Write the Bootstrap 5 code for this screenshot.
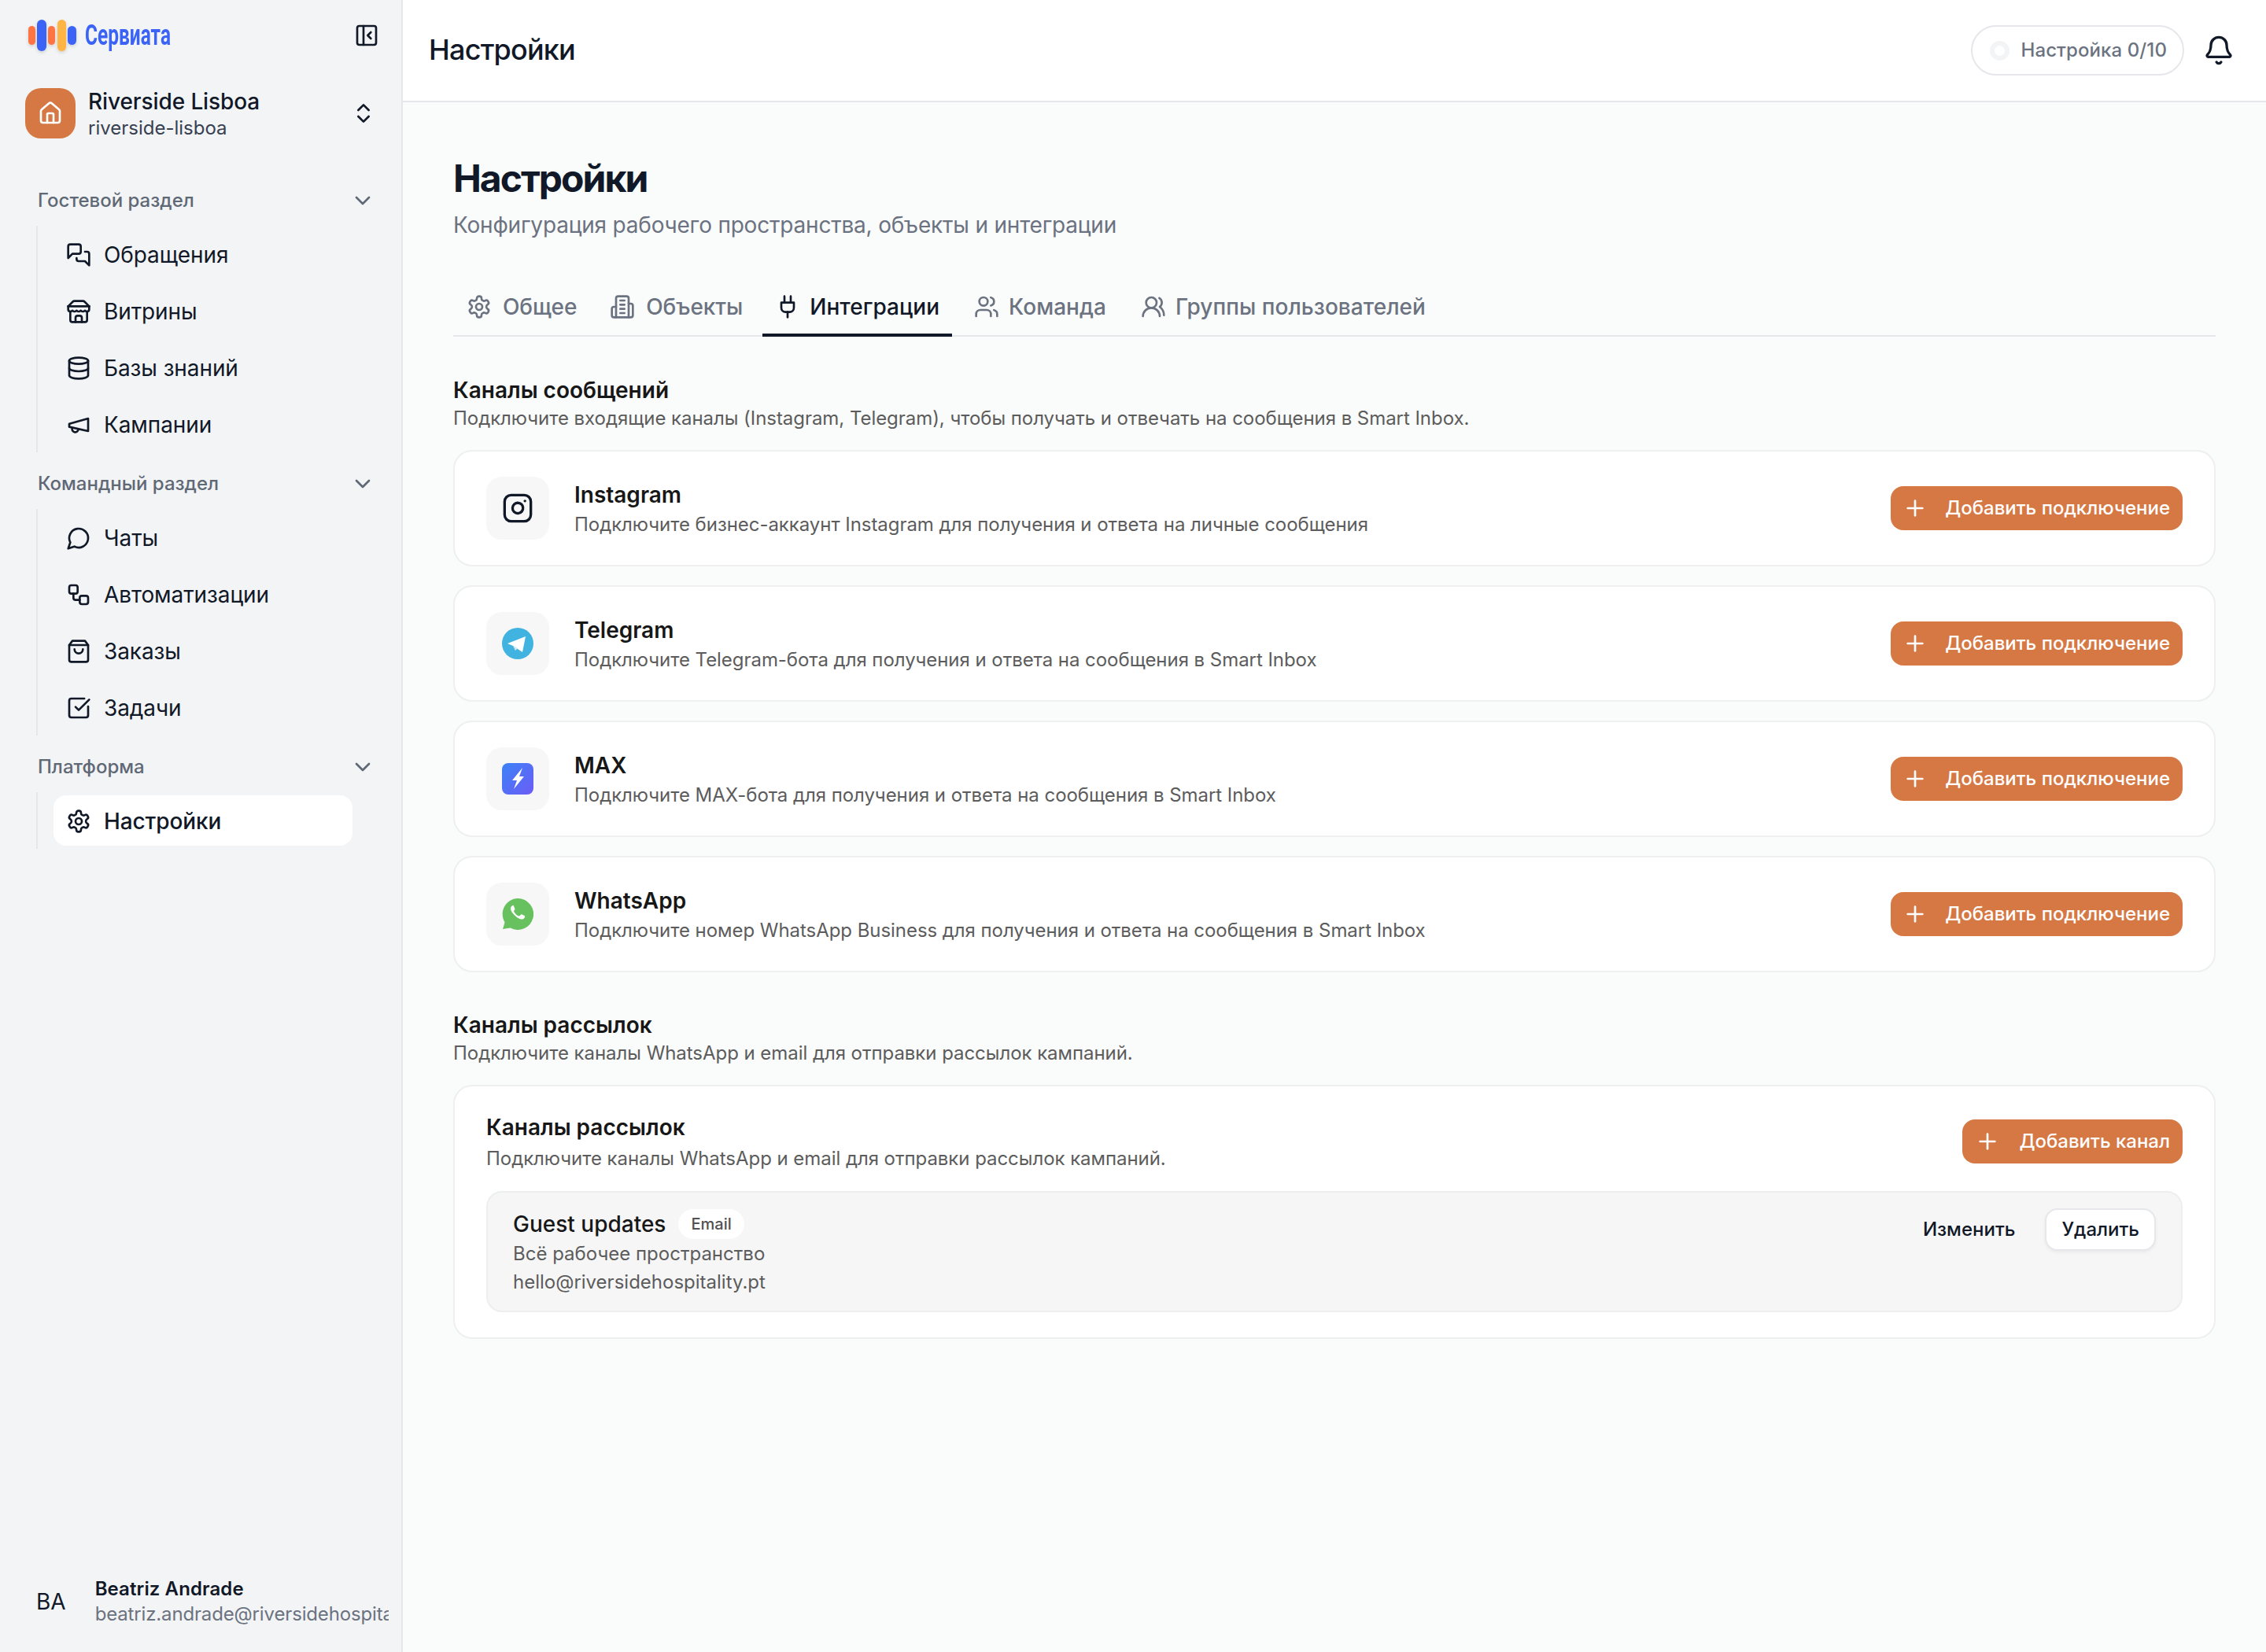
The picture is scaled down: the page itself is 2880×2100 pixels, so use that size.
<!DOCTYPE html>
<html lang="ru">
<head>
    <meta charset="UTF-8">
    <meta name="viewport" content="width=device-width, initial-scale=1.0">
    <title>Настройки</title>
    <link href="https://cdn.jsdelivr.net/npm/bootstrap@5.3.0/dist/css/bootstrap.min.css" rel="stylesheet">
    <style>
        body {
            font-family: Inter, "Noto Sans", sans-serif;
            background-color: #fafbfb;
            color: #111827;
        }
        svg.ico {
            fill: none;
            stroke: currentColor;
            stroke-width: 2;
            stroke-linecap: round;
            stroke-linejoin: round;
            flex-shrink: 0;
        }
        .side-panel {
            width: 512px;
            background-color: #f3f4f6;
            border-right: 2px solid #e5e7eb;
        }
        .logo-row { height: 90px; padding: 0 28px 0 36px; }
        .logo-bars { width: 61px; height: 40px; gap: 2.2px; filter: drop-shadow(0 2px 2px rgba(0,0,0,.14)); }
        .logo-bars span { display: block; border-radius: 6px; }
        .logo-bars span:nth-child(1) { width: 9px; height: 24px; background: #ff7443; }
        .logo-bars span:nth-child(2) { width: 12px; height: 40px; background: #3b63f5; }
        .logo-bars span:nth-child(3) { width: 9px; height: 24px; background: #ff7443; }
        .logo-bars span:nth-child(4) { width: 11px; height: 40px; background: #ffb545; }
        .logo-bars span:nth-child(5) { width: 11px; height: 24px; background: #3b63f5; }
        .logo-text {
            font-family: Roboto, sans-serif;
            font-weight: 700;
            font-size: 36px;
            line-height: 40px;
            color: #3b63f5;
            transform: scaleX(.68);
            transform-origin: left center;
            white-space: nowrap;
            margin-left: 11px;
        }
        .space-row { height: 64px; margin: 22px 0 0 32px; padding-right: 32px; }
        .space-icon {
            width: 64px; height: 64px;
            background-color: #d67844;
            border-radius: 20px;
            color: #fff;
        }
        .space-name { font-size: 28px; line-height: 36px; font-weight: 500; letter-spacing: -.1px; }
        .space-slug { font-size: 24px; line-height: 28px; color: #374151; margin-top: 2px; }
        .group-label {
            height: 56px;
            margin: 12px 32px 4px 48px;
            font-size: 24px;
            font-weight: 500;
            color: #5f6875;
            padding-right: 1px;
        }
        .first-group { margin-top: 51px; }
        .group-list {
            margin-left: 46px;
            padding: 4px 0 4px 20px;
            border-left: 2px solid #e5e7eb;
            width: 402px;
            gap: 8px;
        }
        .side-link {
            height: 64px;
            padding: 1px 16px 0;
            gap: 16px;
            font-size: 28px;
            letter-spacing: -.1px;
            color: #111827;
            border-radius: 16px;
            text-decoration: none;
        }
        .side-link.on { background-color: #fff; font-weight: 500; }
        .user-row { height: 104px; padding: 0 16px 0 46px; gap: 37px; margin-bottom: 12px; }
        .user-init { font-size: 28px; }
        .user-name { font-size: 24px; line-height: 32px; font-weight: 600; letter-spacing: .1px; }
        .user-mail { font-size: 24px; line-height: 32px; letter-spacing: -.15px; color: #6b7280; white-space: nowrap; overflow: hidden; }
        .top-bar {
            height: 130px;
            background-color: #fff;
            border-bottom: 2px solid #e5e7eb;
            padding: 0 40px 0 33px;
        }
        .top-title { font-size: 36px; font-weight: 500; letter-spacing: -.8px; margin: 0; }
        .setup-pill {
            height: 64px;
            border: 2px solid #e5e7eb;
            border-radius: 32px;
            padding: 0 20px 0 22px;
            gap: 14px;
            font-size: 24px;
            letter-spacing: .1px;
            font-weight: 500;
            color: #6b7280;
            background: #fff;
        }
        .setup-ring { width: 25px; height: 25px; border: 6px solid #f3f4f6; border-radius: 50%; }
        .page-body { padding: 64px 64px 0; }
        .page-head { font-size: 48px; line-height: 62px; padding-top: 2px; font-weight: 700; letter-spacing: -2px; margin: 0; }
        .page-sub { font-size: 28px; line-height: 40px; letter-spacing: -.2px; color: #6b7280; margin: 8px 0 46px; }
        .tab-row { border-bottom: 2px solid #e5e7eb; gap: 12px; height: 76px; }
        .tab-link {
            height: 76px;
            padding: 4px 16px 0;
            gap: 12px;
            font-size: 28px;
            letter-spacing: .03px;
            font-weight: 500;
            color: #6b7280;
            text-decoration: none;
            border-bottom: 4px solid transparent;
        }
        .tab-link:nth-child(-n+2) { padding-left: 17px; padding-right: 13px; gap: 14px; letter-spacing: -.1px; }
        .tab-link.on { color: #111827; border-bottom-color: #111827; }
        .sec-title { font-size: 28px; line-height: 40px; font-weight: 600; color: #171717; margin: 48px 0 0; }
        .sec-title.next { margin-top: 47px; }
        .sec-desc { font-size: 24px; line-height: 32px; letter-spacing: -.05px; color: #5c5c5c; margin: 0 0 24px; }
        .chan-card {
            height: 148px;
            border: 2px solid #eeeff1;
            border-radius: 24px;
            padding: 0 40px;
            gap: 32px;
            margin-bottom: 24px;
            background-color: #fff;
        }
        .chan-icon { width: 80px; height: 80px; border-radius: 20px; background-color: #f7f7f7; }
        .chan-name { font-size: 28px; line-height: 40px; font-weight: 600; color: #171717; }
        .chan-desc { font-size: 24px; line-height: 32px; letter-spacing: -.05px; color: #5c5c5c; margin-top: 2px; }
        .mail-card .chan-desc { margin-top: 4px; }
        .btn-add {
            height: 56px;
            padding: 0 16px 0 15px;
            gap: 22px;
            font-size: 24px;
            font-weight: 500;
            color: #fff;
            background-color: #d67844;
            border: 0;
            border-radius: 16px;
        }
        .mail-card .btn-add { padding-left: 16px; gap: 24px; }
        .btn-add:hover { background-color: #c96c3a; color: #fff; }
        .mail-card {
            border: 2px solid #eeeff1;
            border-radius: 24px;
            padding: 32px 40px;
            background-color: #fff;
        }
        .mail-box {
            border: 2px solid #eceef0;
            border-radius: 20px;
            background-color: #f6f6f7;
            padding: 20px 32px 18px;
            margin-top: 25px;
        }
        .mail-title { font-size: 28px; line-height: 40px; font-weight: 500; color: #171717; }
        .mail-chip {
            font-size: 20px;
            line-height: 38px;
            font-weight: 500;
            padding: 0 16px;
            border-radius: 19px;
            background-color: #fff;
            color: #525252;
        }
        .mail-line { font-size: 24px; line-height: 36px; color: #5c5c5c; }
        .mail-acts { gap: 14px; }
        .btn-ghosty, .btn-whity {
            height: 54px;
            padding: 0 24px;
            font-size: 24px;
            font-weight: 500;
            color: #111827;
            border-radius: 16px;
        }
        .btn-ghosty { border: 0; background: transparent; }
        .btn-whity { padding: 0 19px; border: 2px solid #e5e7eb; background-color: #fff; box-shadow: 0 2px 4px rgba(0,0,0,.05); }
    </style>
</head>
<body>
    <svg width="0" height="0" class="position-absolute">
        <symbol id="i-settings" viewBox="0 0 24 24"><path d="M12.22 2h-.44a2 2 0 0 0-2 2v.18a2 2 0 0 1-1 1.730l-.43.25a2 2 0 0 1-2 0l-.15-.08a2 2 0 0 0-2.730.73l-.22.38a2 2 0 0 0 .73 2.730l.15.1a2 2 0 0 1 1 1.720v.51a2 2 0 0 1-1 1.740l-.15.09a2 2 0 0 0-.73 2.730l.22.38a2 2 0 0 0 2.730.73l.15-.08a2 2 0 0 1 2 0l.43.25a2 2 0 0 1 1 1.730V20a2 2 0 0 0 2 2h.44a2 2 0 0 0 2-2v-.18a2 2 0 0 1 1-1.730l.43-.25a2 2 0 0 1 2 0l.15.08a2 2 0 0 0 2.730-.73l.22-.39a2 2 0 0 0-.73-2.730l-.15-.08a2 2 0 0 1-1-1.740v-.5a2 2 0 0 1 1-1.740l.15-.09a2 2 0 0 0 .73-2.730l-.22-.38a2 2 0 0 0-2.730-.73l-.15.08a2 2 0 0 1-2 0l-.43-.25a2 2 0 0 1-1-1.730V4a2 2 0 0 0-2-2z"/><circle cx="12" cy="12" r="3"/></symbol>
        <symbol id="i-chev" viewBox="0 0 24 24"><path d="m6 9 6 6 6-6"/></symbol>
        <symbol id="i-plus" viewBox="0 0 24 24"><path d="M5 12h14"/><path d="M12 5v14"/></symbol>
        <symbol id="i-users" viewBox="0 0 24 24"><path d="M16 21v-2a4 4 0 0 0-4-4H6a4 4 0 0 0-4 4v2"/><circle cx="9" cy="7" r="4"/><path d="M22 21v-2a4 4 0 0 0-3-3.87"/><path d="M16 3.13a4 4 0 0 1 0 7.75"/></symbol>
    </svg>

    <div class="d-flex vh-100">
        <aside class="side-panel d-flex flex-column flex-shrink-0">
            <div class="logo-row d-flex align-items-center justify-content-between">
                <div class="d-flex align-items-center">
                    <div class="logo-bars d-flex align-items-center">
                        <span></span><span></span><span></span><span></span><span></span>
                    </div>
                    <span class="logo-text">Сервиата</span>
                </div>
                <svg class="ico" width="32" height="32" viewBox="0 0 24 24"><rect width="18" height="18" x="3" y="3" rx="2"/><path d="M9 3v18"/><path d="m16 15-3-3 3-3"/></svg>
            </div>

            <div class="space-row d-flex align-items-center">
                <div class="space-icon d-flex align-items-center justify-content-center">
                    <svg class="ico" width="32" height="32" viewBox="0 0 24 24"><path d="M15 21v-8a1 1 0 0 0-1-1h-4a1 1 0 0 0-1 1v8"/><path d="M3 10a2 2 0 0 1 .709-1.528l7-5.999a2 2 0 0 1 2.582 0l7 5.999A2 2 0 0 1 21 10v9a2 2 0 0 1-2 2H5a2 2 0 0 1-2-2z"/></svg>
                </div>
                <div class="ms-3 flex-grow-1">
                    <div class="space-name">Riverside Lisboa</div>
                    <div class="space-slug">riverside-lisboa</div>
                </div>
                <svg class="ico" width="32" height="32" viewBox="0 0 24 24"><path d="m7 15 5 5 5-5"/><path d="m7 9 5-5 5 5"/></svg>
            </div>

            <div class="group-label first-group d-flex align-items-center justify-content-between">
                <span>Гостевой раздел</span>
                <svg class="ico" width="32" height="32"><use href="#i-chev"/></svg>
            </div>
            <div class="group-list d-flex flex-column">
                <a href="#" class="side-link d-flex align-items-center">
                    <svg class="ico" width="32" height="32" viewBox="0 0 24 24"><path d="M14 9a2 2 0 0 1-2 2H6l-4 4V4a2 2 0 0 1 2-2h8a2 2 0 0 1 2 2z"/><path d="M18 9h2a2 2 0 0 1 2 2v11l-4-4h-6a2 2 0 0 1-2-2v-1"/></svg>
                    Обращения</a>
                <a href="#" class="side-link d-flex align-items-center">
                    <svg class="ico" width="32" height="32" viewBox="0 0 24 24"><path d="m2 7 4.41-4.41A2 2 0 0 1 7.83 2h8.34a2 2 0 0 1 1.42.59L22 7"/><path d="M4 12v8a2 2 0 0 0 2 2h12a2 2 0 0 0 2-2v-8"/><path d="M15 22v-4a2 2 0 0 0-2-2h-2a2 2 0 0 0-2 2v4"/><path d="M2 7h20"/><path d="M22 7v3a2 2 0 0 1-2 2 2.7 2.7 0 0 1-1.59-.63.7.7 0 0 0-.82 0A2.7 2.7 0 0 1 16 12a2.7 2.7 0 0 1-1.59-.63.7.7 0 0 0-.82 0A2.7 2.7 0 0 1 12 12a2.7 2.7 0 0 1-1.59-.63.7.7 0 0 0-.82 0A2.7 2.7 0 0 1 8 12a2.7 2.7 0 0 1-1.59-.63.7.7 0 0 0-.82 0A2.7 2.7 0 0 1 4 12a2 2 0 0 1-2-2V7"/></svg>
                    Витрины</a>
                <a href="#" class="side-link d-flex align-items-center">
                    <svg class="ico" width="32" height="32" viewBox="0 0 24 24"><ellipse cx="12" cy="5" rx="9" ry="3"/><path d="M3 5V19A9 3 0 0 0 21 19V5"/><path d="M3 12A9 3 0 0 0 21 12"/></svg>
                    Базы знаний</a>
                <a href="#" class="side-link d-flex align-items-center">
                    <svg class="ico" width="32" height="32" viewBox="0 0 24 24"><path d="m3 11 18-5v12L3 14v-3z"/><path d="M11.6 16.8a3 3 0 1 1-5.8-1.6"/></svg>
                    Кампании</a>
            </div>

            <div class="group-label d-flex align-items-center justify-content-between">
                <span>Командный раздел</span>
                <svg class="ico" width="32" height="32"><use href="#i-chev"/></svg>
            </div>
            <div class="group-list d-flex flex-column">
                <a href="#" class="side-link d-flex align-items-center">
                    <svg class="ico" width="32" height="32" viewBox="0 0 24 24"><path d="M7.9 20A9 9 0 1 0 4 16.1L2 22Z"/></svg>
                    Чаты</a>
                <a href="#" class="side-link d-flex align-items-center">
                    <svg class="ico" width="32" height="32" viewBox="0 0 24 24"><rect width="8" height="8" x="3" y="3" rx="2"/><path d="M7 11v4a2 2 0 0 0 2 2h4"/><rect width="8" height="8" x="13" y="13" rx="2"/></svg>
                    Автоматизации</a>
                <a href="#" class="side-link d-flex align-items-center">
                    <svg class="ico" width="32" height="32" viewBox="0 0 24 24"><path d="M6 2 3 6v14a2 2 0 0 0 2 2h14a2 2 0 0 0 2-2V6l-3-4Z"/><path d="M3 6h18"/><path d="M16 10a4 4 0 0 1-8 0"/></svg>
                    Заказы</a>
                <a href="#" class="side-link d-flex align-items-center">
                    <svg class="ico" width="32" height="32" viewBox="0 0 24 24"><path d="M21 10.656V19a2 2 0 0 1-2 2H5a2 2 0 0 1-2-2V5a2 2 0 0 1 2-2h12.344"/><path d="m9 11 3 3L22 4"/></svg>
                    Задачи</a>
            </div>

            <div class="group-label d-flex align-items-center justify-content-between">
                <span>Платформа</span>
                <svg class="ico" width="32" height="32"><use href="#i-chev"/></svg>
            </div>
            <div class="group-list d-flex flex-column">
                <a href="#" class="side-link on d-flex align-items-center">
                    <svg class="ico" width="32" height="32"><use href="#i-settings"/></svg>
                    Настройки</a>
            </div>

            <div class="user-row d-flex align-items-center mt-auto">
                <span class="user-init">BA</span>
                <div class="overflow-hidden">
                    <div class="user-name">Beatriz Andrade</div>
                    <div class="user-mail">beatriz.andrade@riversidehospitality.pt</div>
                </div>
            </div>
        </aside>

        <div class="flex-grow-1 d-flex flex-column">
            <header class="top-bar d-flex align-items-center justify-content-between">
                <h1 class="top-title">Настройки</h1>
                <div class="d-flex align-items-center gap-4">
                    <div class="setup-pill d-flex align-items-center">
                        <span class="setup-ring"></span>
                        Настройка 0/10
                    </div>
                    <svg class="ico" width="40" height="40" viewBox="0 0 24 24"><path d="M10.268 21a2 2 0 0 0 3.464 0"/><path d="M3.262 15.326A1 1 0 0 0 4 17h16a1 1 0 0 0 .74-1.673C19.41 13.956 18 12.499 18 8A6 6 0 0 0 6 8c0 4.499-1.411 5.956-2.738 7.326"/></svg>
                </div>
            </header>

            <main class="page-body flex-grow-1">
                <h2 class="page-head">Настройки</h2>
                <p class="page-sub">Конфигурация рабочего пространства, объекты и интеграции</p>

                <nav class="tab-row d-flex">
                    <a href="#" class="tab-link d-flex align-items-center">
                        <svg class="ico" width="32" height="32"><use href="#i-settings"/></svg>Общее</a>
                    <a href="#" class="tab-link d-flex align-items-center">
                        <svg class="ico" width="32" height="32" viewBox="0 0 24 24"><path d="M6 22V4a2 2 0 0 1 2-2h8a2 2 0 0 1 2 2v18Z"/><path d="M6 12H4a2 2 0 0 0-2 2v6a2 2 0 0 0 2 2h2"/><path d="M18 9h2a2 2 0 0 1 2 2v9a2 2 0 0 1-2 2h-2"/><path d="M10 6h4"/><path d="M10 10h4"/><path d="M10 14h4"/><path d="M10 18h4"/></svg>Объекты</a>
                    <a href="#" class="tab-link on d-flex align-items-center">
                        <svg class="ico" width="32" height="32" viewBox="0 0 24 24"><path d="M12 22v-5"/><path d="M9 8V2"/><path d="M15 8V2"/><path d="M18 8v5a4 4 0 0 1-4 4h-4a4 4 0 0 1-4-4V8Z"/></svg>Интеграции</a>
                    <a href="#" class="tab-link d-flex align-items-center">
                        <svg class="ico" width="32" height="32"><use href="#i-users"/></svg>Команда</a>
                    <a href="#" class="tab-link d-flex align-items-center">
                        <svg class="ico" width="32" height="32" viewBox="0 0 24 24"><path d="M18 21a8 8 0 0 0-16 0"/><circle cx="10" cy="8" r="5"/><path d="M22 20c0-3.370-2-6.500-4-8a5 5 0 0 0-.45-8.300"/></svg>Группы пользователей</a>
                </nav>

                <h3 class="sec-title">Каналы сообщений</h3>
                <p class="sec-desc">Подключите входящие каналы (Instagram, Telegram), чтобы получать и отвечать на сообщения в Smart Inbox.</p>

                <div class="chan-card d-flex align-items-center">
                    <div class="chan-icon d-flex align-items-center justify-content-center">
                        <svg class="ico" width="40" height="40" viewBox="0 0 24 24"><rect width="20" height="20" x="2" y="2" rx="5"/><path d="M16 11.37A4 4 0 1 1 12.63 8 4 4 0 0 1 16 11.37z"/><path d="M17.5 6.5h.01"/></svg>
                    </div>
                    <div class="flex-grow-1">
                        <div class="chan-name">Instagram</div>
                        <div class="chan-desc">Подключите бизнес-аккаунт Instagram для получения и ответа на личные сообщения</div>
                    </div>
                    <button class="btn btn-add d-flex align-items-center"><svg class="ico" width="32" height="32"><use href="#i-plus"/></svg>Добавить подключение</button>
                </div>

                <div class="chan-card d-flex align-items-center">
                    <div class="chan-icon d-flex align-items-center justify-content-center">
                        <svg width="40" height="40" viewBox="0 0 40 40"><circle cx="20" cy="20" r="20" fill="#40b3e0"/><path d="M30 11 7 20l7 3 12 8z" fill="#fff"/><path d="M14 23l3 6 3-3z" fill="#d2e5f1"/></svg>
                    </div>
                    <div class="flex-grow-1">
                        <div class="chan-name">Telegram</div>
                        <div class="chan-desc">Подключите Telegram-бота для получения и ответа на сообщения в Smart Inbox</div>
                    </div>
                    <button class="btn btn-add d-flex align-items-center"><svg class="ico" width="32" height="32"><use href="#i-plus"/></svg>Добавить подключение</button>
                </div>

                <div class="chan-card d-flex align-items-center">
                    <div class="chan-icon d-flex align-items-center justify-content-center">
                        <svg width="40" height="40" viewBox="0 0 40 40"><defs><linearGradient id="maxg" x1="0" y1="0" x2="1" y2="1"><stop offset="0" stop-color="#3b82f6"/><stop offset="1" stop-color="#6d5cf6"/></linearGradient></defs><rect width="40" height="40" rx="8" fill="url(#maxg)"/><path d="M26 6 13 22h6l-4 11 13-16h-6z" fill="#fff"/></svg>
                    </div>
                    <div class="flex-grow-1">
                        <div class="chan-name">MAX</div>
                        <div class="chan-desc">Подключите MAX-бота для получения и ответа на сообщения в Smart Inbox</div>
                    </div>
                    <button class="btn btn-add d-flex align-items-center"><svg class="ico" width="32" height="32"><use href="#i-plus"/></svg>Добавить подключение</button>
                </div>

                <div class="chan-card d-flex align-items-center">
                    <div class="chan-icon d-flex align-items-center justify-content-center">
                        <svg width="40" height="40" viewBox="0 0 40 40"><path d="M20 0a20 20 0 1 1-9.400 37.600L1 39l2.600-8.600A20 20 0 0 1 20 0z" fill="#67c15e"/><path d="M14 9c-1 0-3 1.500-3 4 0 2 1.500 5 4.500 8s6 5 8.500 5.500c2.500.4 4.500-1 5-2.600.2-.8.2-1.400 0-1.600l-4-2c-.5-.2-.9 0-1.200.4l-1.300 1.600c-.3.3-.6.4-1 .2-1-.4-2.600-1.200-4-2.600-1.200-1.200-2-2.500-2.400-3.400-.2-.4 0-.7.2-1l1-1.200c.3-.4.3-.7.1-1.100l-1.700-4c-.2-.4-.5-.6-.7-.6z" fill="#fff"/></svg>
                    </div>
                    <div class="flex-grow-1">
                        <div class="chan-name">WhatsApp</div>
                        <div class="chan-desc">Подключите номер WhatsApp Business для получения и ответа на сообщения в Smart Inbox</div>
                    </div>
                    <button class="btn btn-add d-flex align-items-center"><svg class="ico" width="32" height="32"><use href="#i-plus"/></svg>Добавить подключение</button>
                </div>

                <h3 class="sec-title next">Каналы рассылок</h3>
                <p class="sec-desc">Подключите каналы WhatsApp и email для отправки рассылок кампаний.</p>

                <div class="mail-card">
                    <div class="d-flex align-items-center justify-content-between">
                        <div>
                            <div class="chan-name">Каналы рассылок</div>
                            <div class="chan-desc">Подключите каналы WhatsApp и email для отправки рассылок кампаний.</div>
                        </div>
                        <button class="btn btn-add d-flex align-items-center"><svg class="ico" width="32" height="32"><use href="#i-plus"/></svg>Добавить канал</button>
                    </div>
                    <div class="mail-box d-flex justify-content-between align-items-start">
                        <div>
                            <div class="d-flex align-items-center gap-3">
                                <span class="mail-title">Guest updates</span>
                                <span class="mail-chip">Email</span>
                            </div>
                            <div class="mail-line">Всё рабочее пространство</div>
                            <div class="mail-line">hello@riversidehospitality.pt</div>
                        </div>
                        <div class="mail-acts d-flex align-items-center">
                            <button class="btn btn-ghosty">Изменить</button>
                            <button class="btn btn-whity">Удалить</button>
                        </div>
                    </div>
                </div>
            </main>
        </div>
    </div>
    <script src="https://cdn.jsdelivr.net/npm/bootstrap@5.3.0/dist/js/bootstrap.bundle.min.js"></script>
</body>
</html>
